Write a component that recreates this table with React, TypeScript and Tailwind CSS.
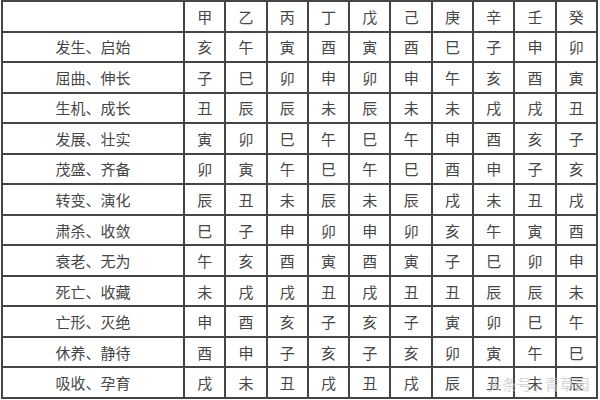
const STEMS = ['甲', '乙', '丙', '丁', '戊', '己', '庚', '辛', '壬', '癸'];

const ROWS: [string, string[]][] = [
  ['发生、启始', ['亥', '午', '寅', '酉', '寅', '酉', '巳', '子', '申', '卯']],
  ['屈曲、伸长', ['子', '巳', '卯', '申', '卯', '申', '午', '亥', '酉', '寅']],
  ['生机、成长', ['丑', '辰', '辰', '未', '辰', '未', '未', '戌', '戌', '丑']],
  ['发展、壮实', ['寅', '卯', '巳', '午', '巳', '午', '申', '酉', '亥', '子']],
  ['茂盛、齐备', ['卯', '寅', '午', '巳', '午', '巳', '酉', '申', '子', '亥']],
  ['转变、演化', ['辰', '丑', '未', '辰', '未', '辰', '戌', '未', '丑', '戌']],
  ['肃杀、收敛', ['巳', '子', '申', '卯', '申', '卯', '亥', '午', '寅', '酉']],
  ['衰老、无为', ['午', '亥', '酉', '寅', '酉', '寅', '子', '巳', '卯', '申']],
  ['死亡、收藏', ['未', '戌', '戌', '丑', '戌', '丑', '丑', '辰', '辰', '未']],
  ['亡形、灭绝', ['申', '酉', '亥', '子', '亥', '子', '寅', '卯', '巳', '午']],
  ['休养、静待', ['酉', '申', '子', '亥', '子', '亥', '卯', '寅', '午', '巳']],
  ['吸收、孕育', ['戌', '未', '丑', '戌', '丑', '戌', '辰', '丑', '未', '辰']]
];

const cell = 'flex items-center justify-center bg-white';

export default function App() {
  return (
    <div
      className="relative h-[400px] w-[600px] overflow-hidden bg-white pl-px text-[15px] leading-none text-[#464646]"
      style={{ fontFamily: '"Noto Sans CJK SC", "Noto Sans", sans-serif' }}
    >
      <div className="grid h-[399px] w-[597px] grid-cols-[180px_repeat(10,minmax(0,1fr))] grid-rows-[repeat(13,minmax(0,1fr))] gap-[2px] bg-[#454545] p-[2px]">
        <div className={cell} />
        {STEMS.map((stem) => (
          <div key={stem} className={cell}>
            {stem}
          </div>
        ))}

        {ROWS.map(([label, branches]) => (
          <div key={label} className="contents">
            <div className={cell}>{label}</div>
            {branches.map((branch, index) => (
              <div key={index} className={cell}>
                {branch}
              </div>
            ))}
          </div>
        ))}
      </div>

      {/* watermark */}
      <div className="absolute left-[487px] top-[376px] text-[15px] text-[#c8c8c8]/80">
        头条号 / 青草园
      </div>
    </div>
  );
}
